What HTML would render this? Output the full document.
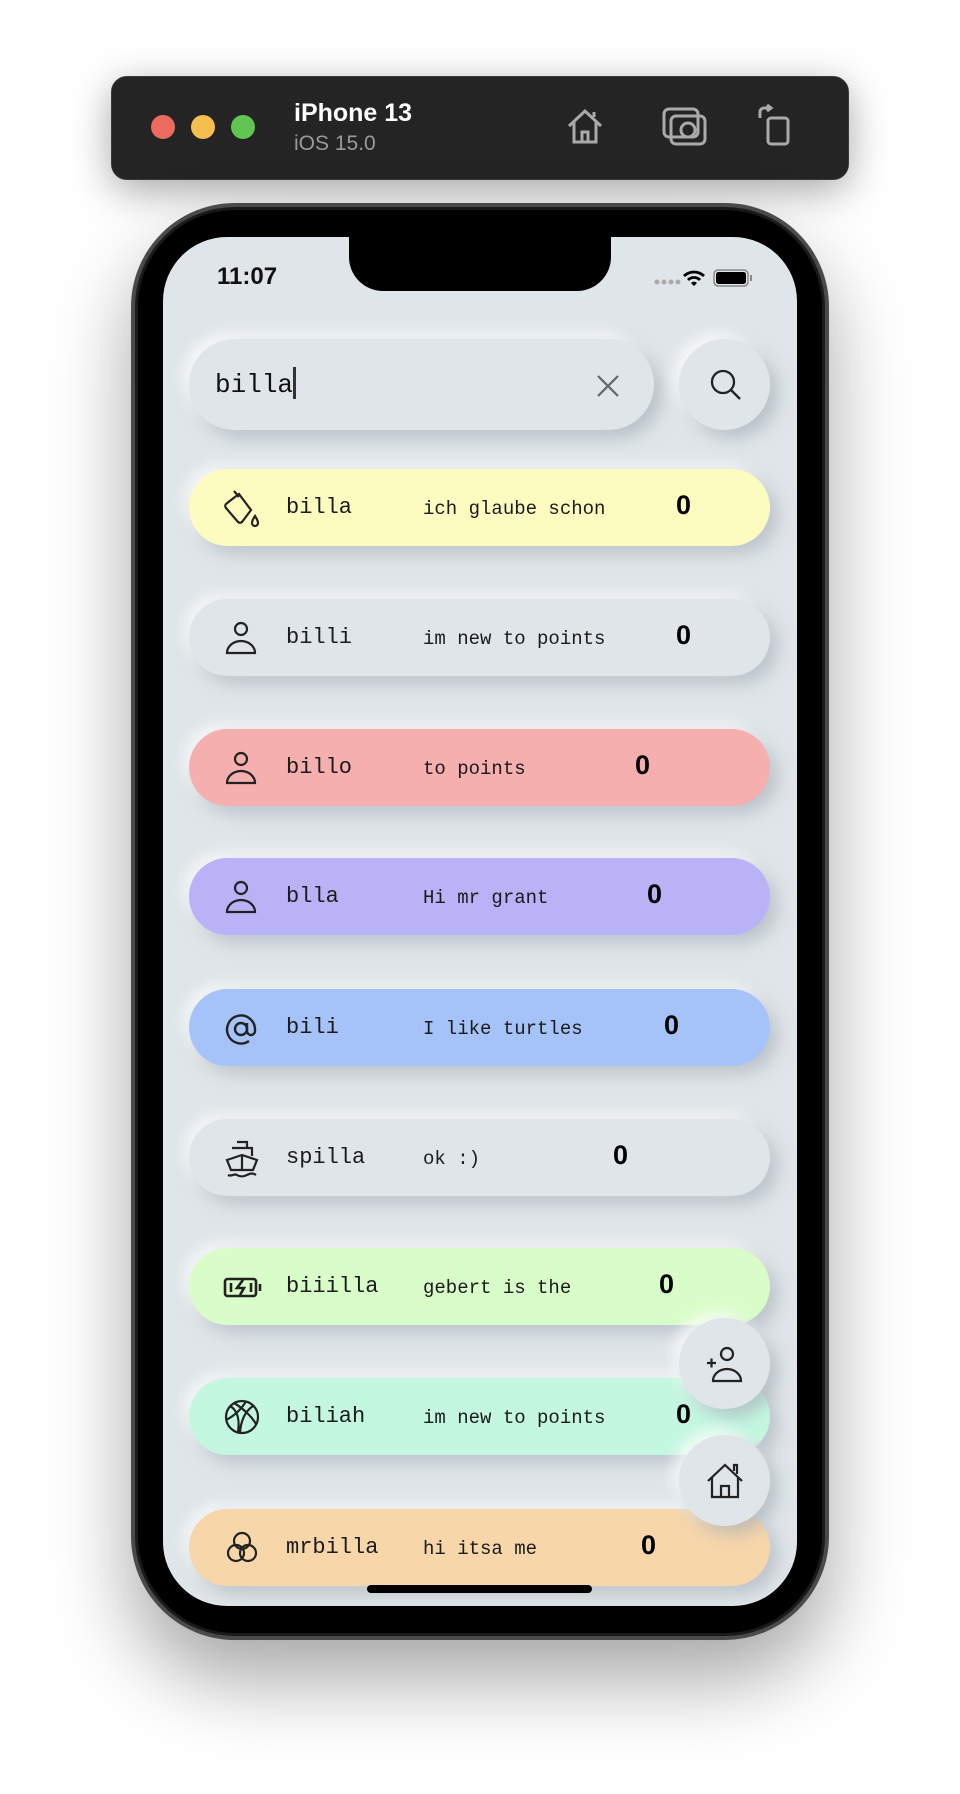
<!DOCTYPE html>
<html><head><meta charset="utf-8"><style>
*{margin:0;padding:0;box-sizing:border-box}
body{width:960px;height:1794px;background:#fff;position:relative;overflow:hidden;font-family:"Liberation Sans",sans-serif}
.bar{position:absolute;left:111px;top:76px;width:738px;height:104px;background:#242424;border-radius:16px;box-shadow:0 10px 40px rgba(0,0,0,.35);border:1px solid #3a3a3a}
.dot{position:absolute;top:115px;width:24px;height:24px;border-radius:50%}
.phone{position:absolute;left:131px;top:203px;width:698px;height:1437px;background:#000;border-radius:104px;border:4px solid #4a4a4a;box-shadow:0 40px 80px rgba(0,0,0,.35),inset 0 0 0 3px #1a1a1a}
.screen{position:absolute;left:163px;top:237px;width:634px;height:1369px;background:#dfe5e8;border-radius:64px;overflow:hidden}
.notch{position:absolute;left:186px;top:-2px;width:262px;height:56px;background:#000;border-radius:0 0 34px 34px}
.row{position:absolute;left:26px;width:581px;height:77px;border-radius:39px;box-shadow:8px 8px 16px rgba(160,170,180,.55),-6px -6px 14px rgba(255,255,255,.7)}
.row svg{position:absolute;left:34px;top:20px}
.nm{position:absolute;left:97px;top:26px;font-family:"Liberation Mono",monospace;font-size:22px;color:#1b1b1b}
.msg{position:absolute;left:234px;top:29px;font-family:"Liberation Mono",monospace;font-size:19px;color:#1b1b1b}
.n{position:absolute;top:21px;font-size:27px;font-weight:bold;color:#000}
.neu{position:absolute;background:#dfe5e8;box-shadow:8px 8px 16px rgba(160,170,180,.6),-6px -6px 14px rgba(255,255,255,.8)}
</style></head><body>
<div class="bar"></div>
<div class="dot" style="left:151px;background:#ec6a5e"></div>
<div class="dot" style="left:191px;background:#f4bf4f"></div>
<div class="dot" style="left:231px;background:#61c554"></div>
<div style="position:absolute;left:294px;top:99px;color:#fff;font-weight:bold;font-size:25px">iPhone 13</div>
<div style="position:absolute;left:294px;top:132px;color:#9a9a9a;font-size:21px">iOS 15.0</div>
<svg style="position:absolute;left:564px;top:105px" width="42" height="42" viewBox="0 0 42 42" fill="none" stroke="#aaa" stroke-width="3"><path d="M5 21L21 6l16 15M10 17v20h22V17M18 37V27h6v10M30 12V7"/></svg>
<svg style="position:absolute;left:662px;top:107px" width="46" height="40" viewBox="0 0 46 40" fill="none" stroke="#aaa" stroke-width="3"><rect x="2" y="2" width="34" height="28" rx="5"/><rect x="9" y="9" width="34" height="28" rx="5"/><circle cx="26" cy="23" r="7"/></svg>
<svg style="position:absolute;left:756px;top:104px" width="36" height="42" viewBox="0 0 36 42" fill="none" stroke="#aaa" stroke-width="3"><rect x="12" y="14" width="20" height="26" rx="3"/><path d="M4 14V8a4 4 0 0 1 4-4h6M11 1l4 3-4 3"/></svg>
<div class="phone"></div>
<div class="screen">
<div class="notch"></div>
<div style="position:absolute;left:54px;top:26px;font-weight:bold;font-size:24px;color:#111">11:07</div>
<svg style="position:absolute;left:490px;top:30px" width="120" height="22" viewBox="0 0 120 22"><g fill="#aaa"><circle cx="4" cy="15" r="2.5"/><circle cx="11" cy="15" r="2.5"/><circle cx="18" cy="15" r="2.5"/><circle cx="25" cy="15" r="2.5"/></g><path d="M41 19l-3-3a4 4 0 0 1 6 0z M34 12a10 10 0 0 1 14 0l-2 2a7 7 0 0 0-10 0z M30 8a16 16 0 0 1 22 0l-2 2a13 13 0 0 0-18 0z" fill="#000"/><rect x="61" y="3" width="34" height="16" rx="4" fill="none" stroke="#888" stroke-width="1.5"/><rect x="63" y="5" width="30" height="12" rx="2.5" fill="#000"/><rect x="97" y="8" width="2" height="6" fill="#888"/></svg>
<div class="neu" style="left:26px;top:102px;width:465px;height:91px;border-radius:46px"></div>
<div style="position:absolute;left:52px;top:130px;font-family:'Liberation Mono',monospace;font-size:26px;color:#111">billa<span style="display:inline-block;width:3px;height:32px;background:#333;vertical-align:-7px"></span></div>
<svg style="position:absolute;left:433px;top:137px" width="24" height="24" viewBox="0 0 24 24" stroke="#666" stroke-width="2.2"><path d="M2 2l20 20M22 2L2 22"/></svg>
<div class="neu" style="left:516px;top:102px;width:91px;height:91px;border-radius:50%"></div>
<svg style="position:absolute;left:546px;top:131px" width="34" height="34" viewBox="0 0 34 34" fill="none" stroke="#222" stroke-width="2.3"><circle cx="14" cy="14" r="11"/><path d="M22 22l9 9"/></svg>

<div class="row" style="top:232px;background:#fdfcc0"><svg width="38" height="40" viewBox="0 0 38 40" fill="none" stroke="#222" stroke-width="2.2"><path d="M11 2l5 6M8 11l8-6 12 16-9 12a3 3 0 0 1-4 0L3 19a3 3 0 0 1 0-4z"/><path d="M32 27c2 3 3 5 3 7a3 3 0 0 1-6 0c0-2 1-4 3-7z"/></svg><span class="nm">billa</span><span class="msg">ich glaube schon</span><span class="n" style="left:487px">0</span></div>

<div class="row" style="top:362px;background:#dfe5e8"><svg width="36" height="38" viewBox="0 0 36 38" fill="none" stroke="#222" stroke-width="2.2"><circle cx="18" cy="10" r="6"/><path d="M4 34a14 12 0 0 1 28 0z"/></svg><span class="nm">billi</span><span class="msg">im new to points</span><span class="n" style="left:487px">0</span></div>

<div class="row" style="top:492px;background:#f4afae"><svg width="36" height="38" viewBox="0 0 36 38" fill="none" stroke="#222" stroke-width="2.2"><circle cx="18" cy="10" r="6"/><path d="M4 34a14 12 0 0 1 28 0z"/></svg><span class="nm">billo</span><span class="msg">to points</span><span class="n" style="left:446px">0</span></div>

<div class="row" style="top:621px;background:#b9b2f7"><svg width="36" height="38" viewBox="0 0 36 38" fill="none" stroke="#222" stroke-width="2.2"><circle cx="18" cy="10" r="6"/><path d="M4 34a14 12 0 0 1 28 0z"/></svg><span class="nm">blla</span><span class="msg">Hi mr grant</span><span class="n" style="left:458px">0</span></div>

<div class="row" style="top:752px;background:#a5c3f8"><svg width="36" height="38" viewBox="0 0 36 38" fill="none" stroke="#222" stroke-width="2.4"><circle cx="18" cy="20" r="6"/><path d="M24 14v8a4 4 0 0 0 8 0v-2a14 14 0 1 0-6 12"/></svg><span class="nm">bili</span><span class="msg">I like turtles</span><span class="n" style="left:475px">0</span></div>

<div class="row" style="top:882px;background:#dfe5e8"><svg width="38" height="40" viewBox="0 0 38 40" fill="none" stroke="#222" stroke-width="2.2"><path d="M14 3h10v6M9 9h20v8M4 21l15-5 15 5-4 10H8zM19 16v15M5 36c4 2 6-2 9 0s6 2 10 0 6-2 9 0"/></svg><span class="nm">spilla</span><span class="msg">ok :)</span><span class="n" style="left:424px">0</span></div>

<div class="row" style="top:1011px;background:#d9fdc8"><svg width="40" height="38" viewBox="0 0 40 38" fill="none" stroke="#222" stroke-width="2.6"><rect x="2" y="11" width="31" height="17" rx="2.5"/><path d="M37 16v7M20 12l-6 8h7l-4 7M8 15v9M28 15v9"/></svg><span class="nm">biiilla</span><span class="msg">gebert is the</span><span class="n" style="left:470px">0</span></div>

<div class="row" style="top:1141px;background:#c4f7e0"><svg width="38" height="38" viewBox="0 0 38 38" fill="none" stroke="#222" stroke-width="2.2"><circle cx="19" cy="19" r="16"/><path d="M7 8c7 4 10 13 8 26M11 5c10 6 18 14 22 21M23 3c-3 6-10 14-20 19M30 8c-6 4-12 12-13 27"/></svg><span class="nm">biliah</span><span class="msg">im new to points</span><span class="n" style="left:487px">0</span></div>

<div class="row" style="top:1272px;background:#f7d6aa"><svg width="38" height="40" viewBox="0 0 38 40" fill="none" stroke="#222" stroke-width="2.2"><circle cx="19" cy="12" r="8"/><circle cx="13" cy="24" r="8"/><circle cx="25" cy="24" r="8"/></svg><span class="nm">mrbilla</span><span class="msg">hi itsa me</span><span class="n" style="left:452px">0</span></div>

<div class="neu" style="left:516px;top:1081px;width:91px;height:91px;border-radius:50%"></div>
<svg style="position:absolute;left:542px;top:1108px" width="40" height="40" viewBox="0 0 40 40" fill="none" stroke="#222" stroke-width="2.2"><circle cx="22" cy="9" r="6"/><path d="M8 36a14 12 0 0 1 28 0z M2 18h9M6.5 13.5v9"/></svg>
<div class="neu" style="left:516px;top:1198px;width:91px;height:91px;border-radius:50%"></div>
<svg style="position:absolute;left:542px;top:1224px" width="40" height="40" viewBox="0 0 40 40" fill="none" stroke="#222" stroke-width="2.2"><path d="M3 20L20 4l17 16M7 16v20h26V16M16 36V25h8v11M29 10V4h3v9"/></svg>
<div style="position:absolute;left:204px;top:1348px;width:225px;height:8px;background:#000;border-radius:4px"></div>
</div>
</body></html>
